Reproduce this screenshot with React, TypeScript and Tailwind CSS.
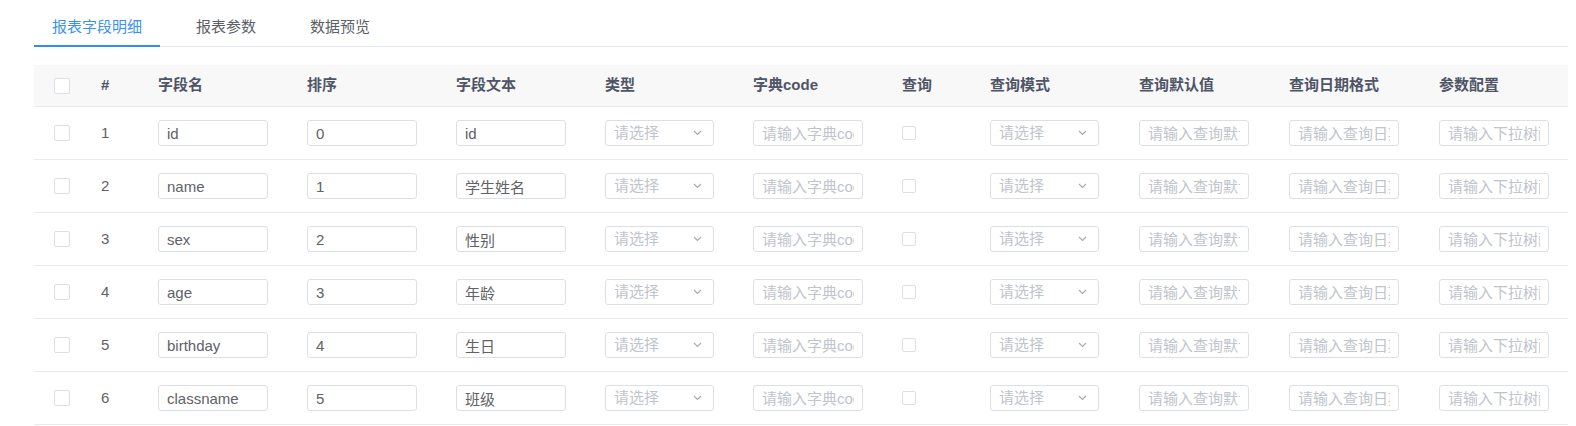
import React from "react";

// Field rows of the report
const fields = [
  { name: "id", order: "0", text: "id" },
  { name: "name", order: "1", text: "学生姓名" },
  { name: "sex", order: "2", text: "性别" },
  { name: "age", order: "3", text: "年龄" },
  { name: "birthday", order: "4", text: "生日" },
  { name: "classname", order: "5", text: "班级" },
];

const tabs = ["报表字段明细", "报表参数", "数据预览"];

const headers = [
  "字段名",
  "排序",
  "字段文本",
  "类型",
  "字典code",
  "查询",
  "查询模式",
  "查询默认值",
  "查询日期格式",
  "参数配置",
];

const cols =
  "grid grid-cols-[67px_57px_149px_149px_149px_148px_149px_88px_149px_150px_150px_1fr] items-center";

function Checkbox({ small }: { small?: boolean }) {
  return (
    <span
      className={
        small
          ? "block h-[14px] w-[14px] rounded-[2px] border border-[#dcdfe6] bg-white"
          : "block h-4 w-4 rounded-[2px] border border-[#dcdfe6] bg-white"
      }
    />
  );
}

function TextInput({ value, placeholder }: { value?: string; placeholder?: string }) {
  return (
    <input
      type="text"
      readOnly
      value={value ?? ""}
      placeholder={placeholder}
      className="h-[26px] w-[110px] rounded-[3px] border border-[#dcdfe6] bg-white px-[8px] text-[15px] text-[#606266] outline-none placeholder:text-[#c0c4cc]"
    />
  );
}

function SelectBox() {
  return (
    <div className="flex h-[26px] w-[109px] items-center justify-between rounded-[3px] border border-[#dcdfe6] bg-white pl-[8px] pr-[11px]">
      <span className="text-[15px] text-[#c0c4cc]">请选择</span>
      <svg width="9" height="6" viewBox="0 0 9 6" fill="none">
        <path d="M1 1l3.5 3.5L8 1" stroke="#a8abb2" strokeWidth="1.2" />
      </svg>
    </div>
  );
}

export default function App() {
  return (
    <div
      className="min-h-[426px] bg-white pt-[7px] pl-[34px] pr-[8px]"
      style={{ fontFamily: '"Liberation Sans", "Noto Sans CJK SC", sans-serif' }}
    >
      {/* Tabs */}
      <div className="flex gap-[18px] border-b border-[#e4e7ed]">
        {tabs.map((tab, i) => (
          <div
            key={tab}
            className={
              i === 0
                ? "-mb-px h-10 border-b-2 border-[#2e8ff0] px-[18px] text-[15px] leading-[40px] text-[#3a93f0]"
                : "-mb-px h-10 border-b-2 border-transparent px-[18px] text-[15px] leading-[40px] text-[#5c5f66]"
            }
          >
            {tab}
          </div>
        ))}
      </div>

      {/* Table */}
      <div className="mt-[18px]">
        <div className={`${cols} h-[42px] border-b border-[#e8eaec] bg-[#f8f8f9] text-[15px] font-bold text-[#4f5566]`}>
          <div className="pl-[20px]">
            <Checkbox />
          </div>
          <div>#</div>
          {headers.map((h) => (
            <div key={h}>{h}</div>
          ))}
        </div>
        {fields.map((f, i) => (
          <div key={f.name} className={`${cols} h-[53px] border-b border-[#e8eaec] text-[15px] text-[#606266]`}>
            <div className="pl-[20px]">
              <Checkbox />
            </div>
            <div>{i + 1}</div>
            <div>
              <TextInput value={f.name} />
            </div>
            <div>
              <TextInput value={f.order} />
            </div>
            <div>
              <TextInput value={f.text} />
            </div>
            <div>
              <SelectBox />
            </div>
            <div>
              <TextInput placeholder="请输入字典code" />
            </div>
            <div>
              <Checkbox small />
            </div>
            <div>
              <SelectBox />
            </div>
            <div>
              <TextInput placeholder="请输入查询默认值" />
            </div>
            <div>
              <TextInput placeholder="请输入查询日期格式" />
            </div>
            <div>
              <TextInput placeholder="请输入下拉树配置" />
            </div>
          </div>
        ))}
      </div>
    </div>
  );
}
